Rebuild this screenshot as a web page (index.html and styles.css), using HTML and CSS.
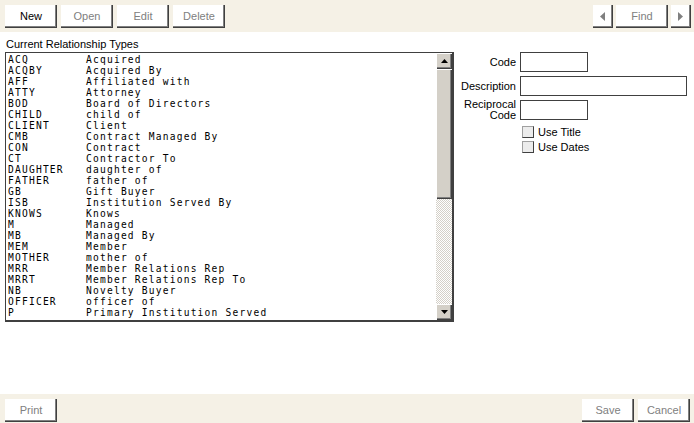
FILE: index.html
```html
<!DOCTYPE html>
<html lang="en">
<head>
<meta charset="UTF-8" />
<title>Relationship Types</title>
<link rel="stylesheet" href="styles.css">
</head>
<body>
<div class="toolbar top">
  <div class="group">
    <button class="btn">New</button>
    <button class="btn off">Open</button>
    <button class="btn off">Edit</button>
    <button class="btn off">Delete</button>
  </div>
  <div class="group nav">
    <button class="btn arrow off"><svg width="5" height="9" viewBox="0 0 5 9"><path d="M5 0 L0 4.5 L5 9 Z" fill="#808080"/></svg></button>
    <button class="btn off">Find</button>
    <button class="btn arrow off"><svg width="5" height="9" viewBox="0 0 5 9"><path d="M0 0 L5 4.5 L0 9 Z" fill="#808080"/></svg></button>
  </div>
</div>

<div class="main">
  <div class="types">
    <div class="caption">Current Relationship Types</div>
    <div class="listbox">
      <ul class="rows">
        <li><span class="code">ACQ</span>Acquired</li>
        <li><span class="code">ACQBY</span>Acquired By</li>
        <li><span class="code">AFF</span>Affiliated with</li>
        <li><span class="code">ATTY</span>Attorney</li>
        <li><span class="code">BOD</span>Board of Directors</li>
        <li><span class="code">CHILD</span>child of</li>
        <li><span class="code">CLIENT</span>Client</li>
        <li><span class="code">CMB</span>Contract Managed By</li>
        <li><span class="code">CON</span>Contract</li>
        <li><span class="code">CT</span>Contractor To</li>
        <li><span class="code">DAUGHTER</span>daughter of</li>
        <li><span class="code">FATHER</span>father of</li>
        <li><span class="code">GB</span>Gift Buyer</li>
        <li><span class="code">ISB</span>Institution Served By</li>
        <li><span class="code">KNOWS</span>Knows</li>
        <li><span class="code">M</span>Managed</li>
        <li><span class="code">MB</span>Managed By</li>
        <li><span class="code">MEM</span>Member</li>
        <li><span class="code">MOTHER</span>mother of</li>
        <li><span class="code">MRR</span>Member Relations Rep</li>
        <li><span class="code">MRRT</span>Member Relations Rep To</li>
        <li><span class="code">NB</span>Novelty Buyer</li>
        <li><span class="code">OFFICER</span>officer of</li>
        <li><span class="code">P</span>Primary Institution Served</li>
      </ul>
      <div class="scrollbar">
        <div class="sb-btn"><svg width="7" height="4" viewBox="0 0 7 4"><path d="M3.5 0 L7 4 L0 4 Z" fill="#000"/></svg></div>
        <div class="sb-thumb"></div>
        <div class="sb-track"></div>
        <div class="sb-btn"><svg width="7" height="4" viewBox="0 0 7 4"><path d="M0 0 L7 0 L3.5 4 Z" fill="#000"/></svg></div>
      </div>
    </div>
  </div>

  <div class="form">
    <label class="lbl">Code</label>
    <input class="field short" type="text">
    <label class="lbl">Description</label>
    <input class="field long" type="text">
    <label class="lbl two">Reciprocal<br>Code</label>
    <input class="field short" type="text">
    <div></div>
    <div class="checks">
      <div class="check"><span class="box"></span>Use Title</div>
      <div class="check"><span class="box"></span>Use Dates</div>
    </div>
  </div>
</div>

<div class="toolbar bottom">
  <div class="group">
    <button class="btn off">Print</button>
  </div>
  <div class="group">
    <button class="btn off">Save</button>
    <button class="btn off">Cancel</button>
  </div>
</div>
</body>
</html>
```

FILE: styles.css
```css
* { box-sizing: border-box; }

body { margin: 0; width: 694px; height: 423px; display: flex; flex-direction: column; background: #fff; font-family: "Liberation Sans", Arial, sans-serif; font-size: 11px; color: #000; overflow: hidden; }

.toolbar { background: #f5f1e6; display: flex; justify-content: space-between; }
.toolbar.top { height: 32px; padding: 5px 3px 0 5px; }
.toolbar.bottom { height: 29px; padding: 5px 4px 0 5px; margin-top: auto; }

.group { display: flex; gap: 4px; }
.group.nav { gap: 3px; }

.btn { width: 52px; height: 23px; padding: 0 0 1px; background: #fff; border: none; box-shadow: inset -1px -1px #404040, inset -2px -2px #808080; font-family: "Liberation Sans", Arial, sans-serif; font-size: 11px; color: #000; }
.btn.off { color: #808080; }
.btn.arrow { width: 20px; display: flex; align-items: center; justify-content: center; padding: 0 2px 1px 0; }

.main { flex: 1; display: flex; gap: 6px; padding: 6px 0 0 5px; }

.caption { height: 14px; line-height: 12px; padding-left: 1px; }

.listbox { width: 449px; height: 270px; display: flex; border: 1px solid #404040; border-right-width: 2px; border-bottom-width: 2px; }

.rows { flex: 1; margin: 0; padding: 1px 0 0 2px; list-style: none; font-family: "DejaVu Sans Mono", monospace; font-size: 9.6px; letter-spacing: 1.2px; line-height: 11px; overflow: hidden; }
.rows li { display: flex; white-space: pre; height: 11px; }
.code { width: 78px; flex: none; }

.scrollbar { width: 16px; display: flex; flex-direction: column; }
.sb-btn { height: 16px; background: #d4d0c8; box-shadow: inset 1px 1px #fff, inset -1px -1px #404040, inset -2px -2px #808080; display: flex; align-items: center; justify-content: center; }
.sb-thumb { height: 130px; background: #d4d0c8; box-shadow: inset 1px 1px #fff, inset -1px -1px #404040, inset -2px -2px #808080; }
.sb-track { flex: 1; background: repeating-conic-gradient(#d4d0c8 0 25%, #fff 0 50%) 0 0 / 2px 2px; }

.form { display: grid; grid-template-columns: 56px auto; column-gap: 4px; row-gap: 4px; align-content: start; padding-top: 14px; }
.lbl { text-align: right; align-self: center; }
.lbl.two { line-height: 11px; height: 20px; margin-top: -1px; align-self: start; }
.field { height: 20px; margin: 0; border: 1px solid #404040; background: #fff; padding: 0 2px; font-family: "Liberation Sans", Arial, sans-serif; font-size: 11px; }
.field.short { width: 68px; }
.field.long { width: 167px; }

.checks { padding: 2px 0 0 2px; display: flex; flex-direction: column; gap: 3px; }
.check { display: flex; align-items: center; gap: 4px; height: 12px; }
.box { width: 12px; height: 12px; background: #ececec; border: 1px solid #a0a0a0; border-right-color: #404040; border-bottom-color: #404040; }
```
